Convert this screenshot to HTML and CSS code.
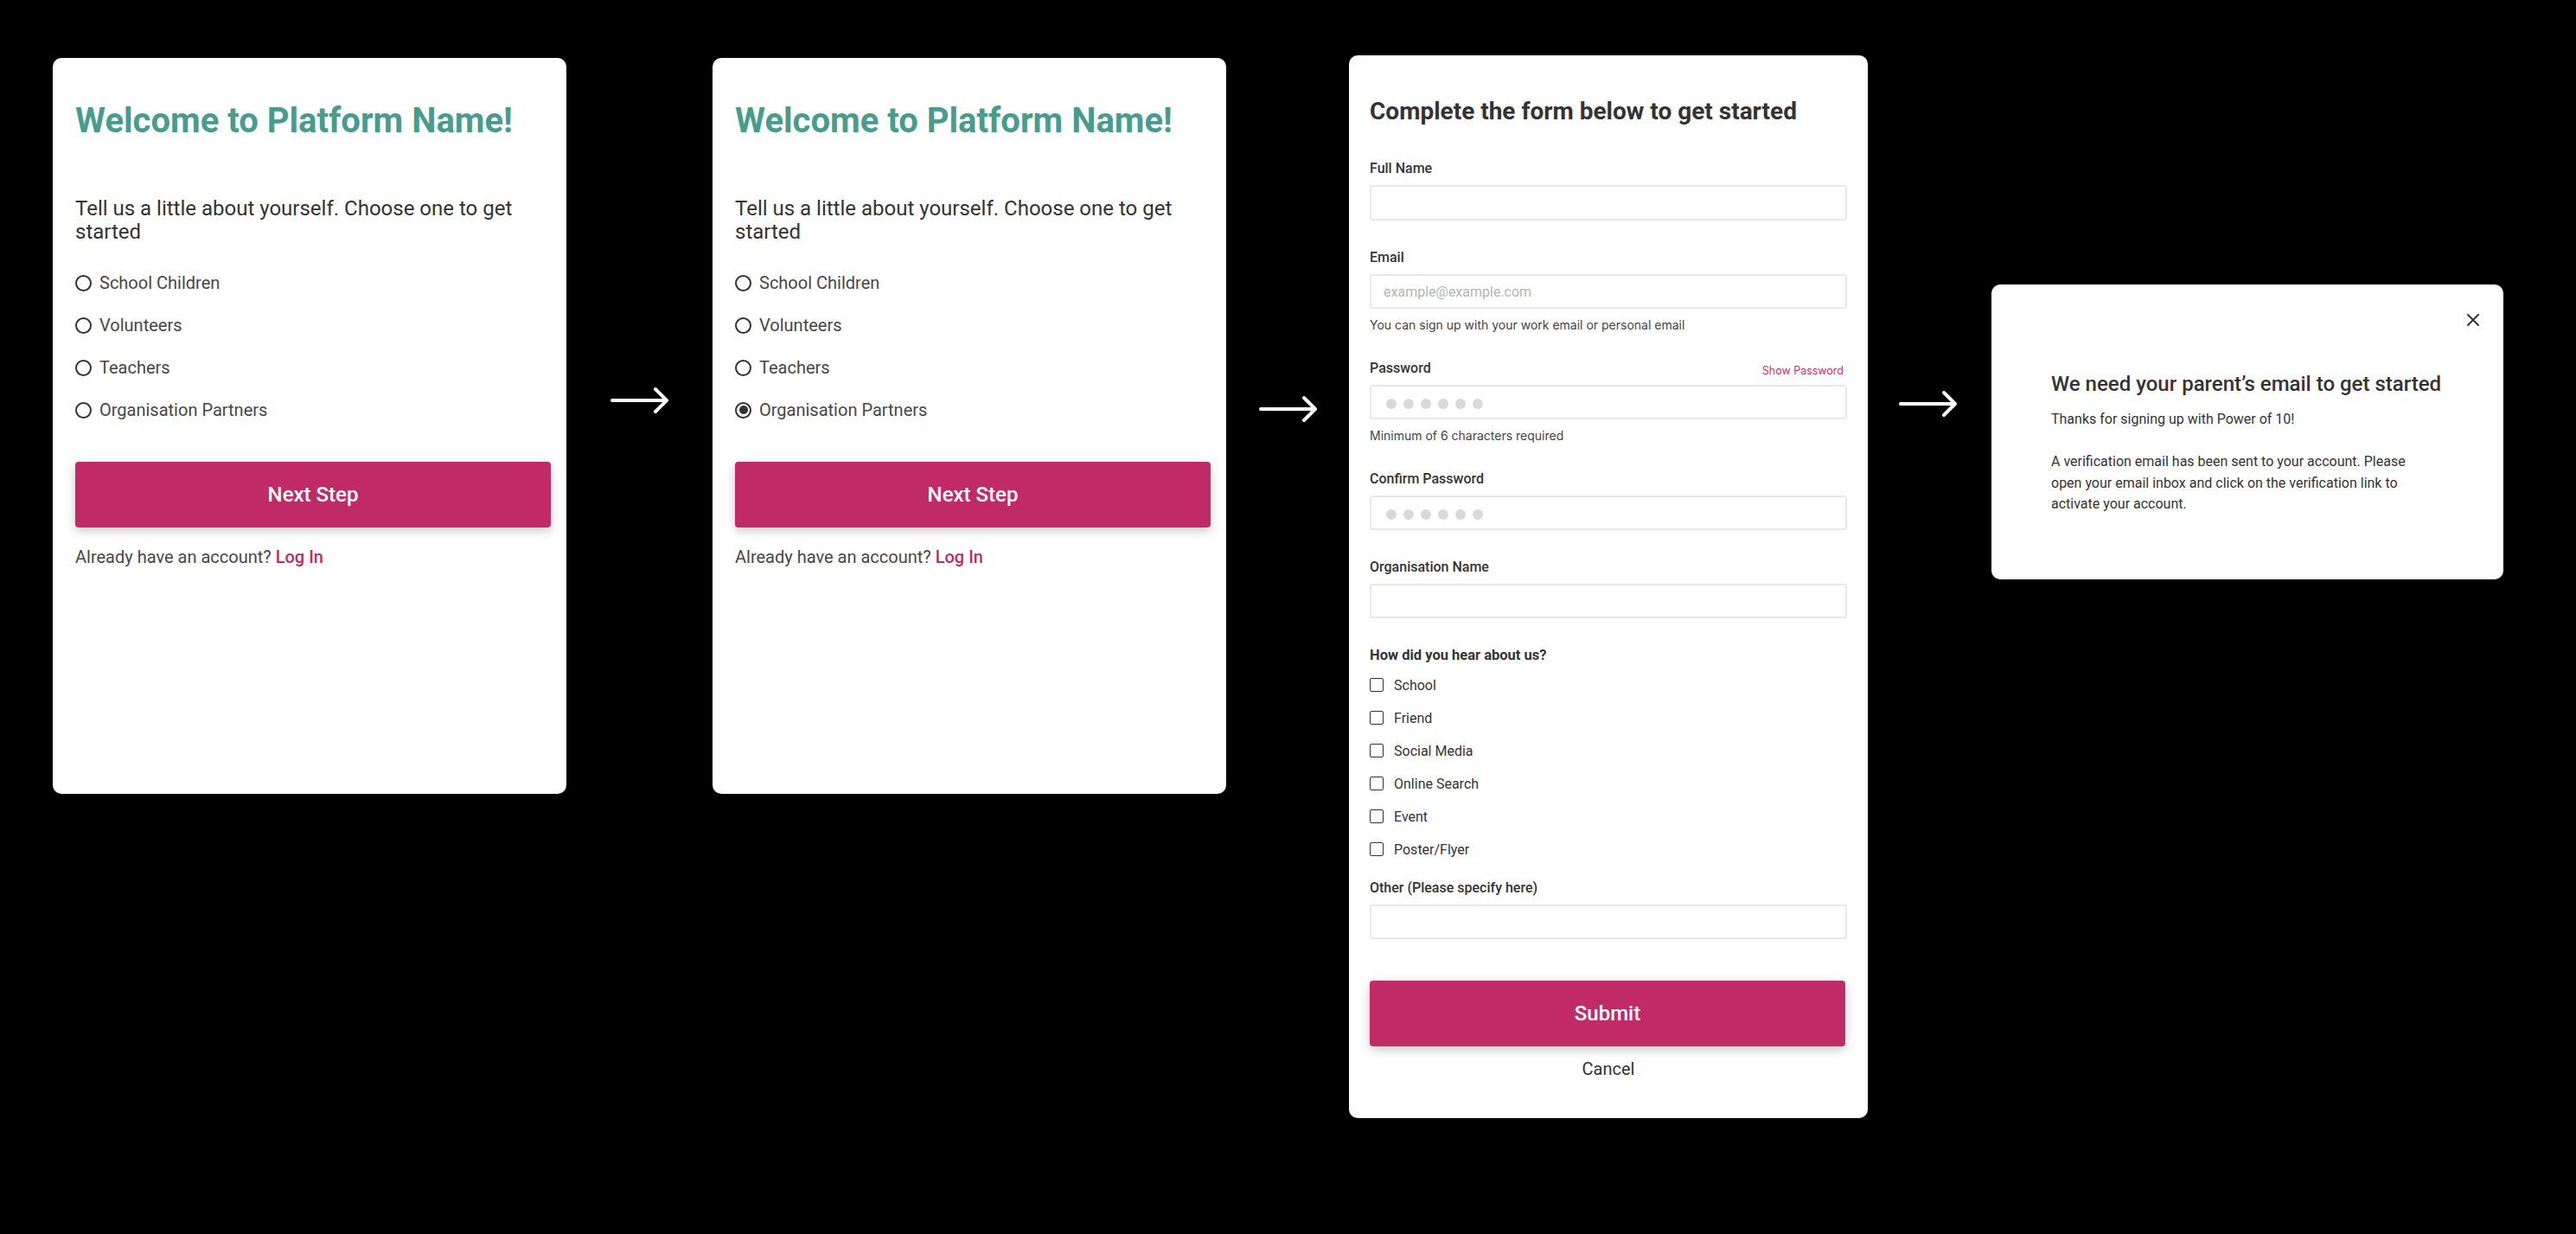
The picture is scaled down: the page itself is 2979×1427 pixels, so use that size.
FILE: index.html
```html
<!DOCTYPE html>
<html lang="en">
<head>
<meta charset="utf-8">
<title>Sign up flow</title>
<link rel="stylesheet" href="styles.css">
</head>
<body>
<main class="flow">

  <section class="card card-intro">
    <h1 class="intro-title">Welcome to Platform Name!</h1>
    <p class="intro-sub">Tell us a little about yourself. Choose one to get started</p>
    <ul class="options">
      <li class="option"><span class="radio"></span>School Children</li>
      <li class="option"><span class="radio"></span>Volunteers</li>
      <li class="option"><span class="radio"></span>Teachers</li>
      <li class="option"><span class="radio"></span>Organisation Partners</li>
    </ul>
    <div class="btn">Next Step</div>
    <p class="login">Already have an account? <span class="link">Log In</span></p>
  </section>

  <svg class="arrow arrow-1" width="68" height="32" viewBox="0 0 68 32" aria-hidden="true">
    <path d="M2 16H65M52 3L65 16L52 29" fill="none" stroke="#fff" stroke-width="4" stroke-linecap="round" stroke-linejoin="round"/>
  </svg>

  <section class="card card-intro">
    <h1 class="intro-title">Welcome to Platform Name!</h1>
    <p class="intro-sub">Tell us a little about yourself. Choose one to get started</p>
    <ul class="options">
      <li class="option"><span class="radio"></span>School Children</li>
      <li class="option"><span class="radio"></span>Volunteers</li>
      <li class="option"><span class="radio"></span>Teachers</li>
      <li class="option"><span class="radio radio-on"></span>Organisation Partners</li>
    </ul>
    <div class="btn">Next Step</div>
    <p class="login">Already have an account? <span class="link">Log In</span></p>
  </section>

  <svg class="arrow arrow-2" width="68" height="32" viewBox="0 0 68 32" aria-hidden="true">
    <path d="M2 16H65M52 3L65 16L52 29" fill="none" stroke="#fff" stroke-width="4" stroke-linecap="round" stroke-linejoin="round"/>
  </svg>

  <section class="card card-form">
    <h2 class="form-title">Complete the form below to get started</h2>

    <div class="field field-first">
      <div class="label">Full Name</div>
      <div class="input"></div>
    </div>

    <div class="field">
      <div class="label">Email</div>
      <div class="input"><span class="placeholder">example@example.com</span></div>
      <div class="hint">You can sign up with your work email or personal email</div>
    </div>

    <div class="field field-after-hint">
      <div class="label-row">
        <div class="label">Password</div>
        <div class="show">Show Password</div>
      </div>
      <div class="input"><span class="dots"><i></i><i></i><i></i><i></i><i></i><i></i></span></div>
      <div class="hint">Minimum of 6 characters required</div>
    </div>

    <div class="field field-after-hint">
      <div class="label">Confirm Password</div>
      <div class="input"><span class="dots"><i></i><i></i><i></i><i></i><i></i><i></i></span></div>
    </div>

    <div class="field">
      <div class="label">Organisation Name</div>
      <div class="input"></div>
    </div>

    <div class="field">
      <div class="label label-strong">How did you hear about us?</div>
      <ul class="checks">
        <li class="check"><span class="box"></span>School</li>
        <li class="check"><span class="box"></span>Friend</li>
        <li class="check"><span class="box"></span>Social Media</li>
        <li class="check"><span class="box"></span>Online Search</li>
        <li class="check"><span class="box"></span>Event</li>
        <li class="check"><span class="box"></span>Poster/Flyer</li>
      </ul>
    </div>

    <div class="field field-other">
      <div class="label">Other (Please specify here)</div>
      <div class="input"></div>
    </div>

    <div class="btn btn-submit">Submit</div>
    <p class="cancel">Cancel</p>
  </section>

  <svg class="arrow arrow-3" width="68" height="32" viewBox="0 0 68 32" aria-hidden="true">
    <path d="M2 16H65M52 3L65 16L52 29" fill="none" stroke="#fff" stroke-width="4" stroke-linecap="round" stroke-linejoin="round"/>
  </svg>

  <section class="card card-modal">
    <svg class="close" width="14" height="14" viewBox="0 0 14 14" aria-hidden="true">
      <path d="M1 1L13 13M13 1L1 13" stroke="#333" stroke-width="2" stroke-linecap="round"/>
    </svg>
    <h2 class="modal-title">We need your parent’s email to get started</h2>
    <p class="modal-text">Thanks for signing up with Power of 10!</p>
    <p class="modal-text modal-para">A verification email has been sent to your account. Please open your email inbox and click on the verification link to activate your account.</p>
  </section>

</main>
</body>
</html>
```

FILE: styles.css
```css
* { box-sizing: border-box; }

html, body {
  margin: 0;
  padding: 0;
  background: #000;
}

body {
  width: 2979px;
  height: 1427px;
  overflow: hidden;
  font-family: Roboto, "Liberation Sans", Arial, sans-serif;
  color: #333;
}

.flow {
  display: flex;
  align-items: flex-start;
  padding-left: 61px;
}

.card {
  background: #fff;
  border-radius: 10px;
  flex: none;
}

/* arrows */
.arrow { flex: none; display: block; }
.arrow-1 { margin: 447px 50px 0 51px; }
.arrow-2 { margin: 457px 36px 0 38px; }
.arrow-3 { margin: 451px 39px 0 36px; }

/* intro cards */
.card-intro {
  width: 594px;
  height: 851px;
  margin-top: 67px;
  padding: 50px 18px 0 26px;
}

.intro-title {
  margin: 0;
  font-size: 40px;
  line-height: 46px;
  font-weight: 700;
  color: #479c8e;
  white-space: nowrap;
}

.intro-sub {
  margin: 65px 0 0;
  font-size: 24px;
  line-height: 27px;
  font-weight: 400;
  color: #333;
}

.options {
  list-style: none;
  margin: 33px 0 0;
  padding: 0;
  display: flex;
  flex-direction: column;
  gap: 25px;
}

.option {
  display: flex;
  align-items: center;
  gap: 9px;
  height: 24px;
  font-size: 20px;
  line-height: 24px;
  color: #474747;
}

.radio {
  width: 19px;
  height: 19px;
  border: 2px solid #333;
  border-radius: 50%;
  flex: none;
  display: flex;
  align-items: center;
  justify-content: center;
}

.radio-on::after {
  content: "";
  width: 10px;
  height: 10px;
  border-radius: 50%;
  background: #333;
}

.btn {
  width: 550px;
  height: 76px;
  margin-top: 48px;
  background: #c02a67;
  color: #fff;
  border-radius: 4px;
  box-shadow: 0 4px 12px rgba(0, 0, 0, 0.22);
  display: flex;
  align-items: center;
  justify-content: center;
  font-size: 24px;
  font-weight: 500;
}

.login {
  margin: 22px 0 0;
  font-size: 20px;
  line-height: 24px;
  color: #474747;
}

.link {
  color: #c02a67;
  font-weight: 500;
}

/* form card */
.card-form {
  width: 600px;
  height: 1229px;
  margin-top: 64px;
  padding: 49px 24px 0 24px;
  display: flex;
  flex-direction: column;
}

.form-title {
  margin: 0;
  font-size: 28px;
  line-height: 32px;
  font-weight: 700;
  color: #333;
  white-space: nowrap;
}

.field { margin-top: 33px; }
.field-first { margin-top: 40px; }
.field-after-hint { margin-top: 31px; }
.field-other { margin-top: 24px; }

.label {
  font-size: 16px;
  line-height: 20px;
  font-weight: 500;
  color: #333;
}

.label-strong {
  font-size: 16.5px;
  font-weight: 700;
}

.label-row {
  display: flex;
  justify-content: space-between;
  align-items: flex-end;
}

.show {
  font-family: Inter, "Noto Sans", sans-serif;
  font-size: 12.5px;
  line-height: 14px;
  color: #cf2e6c;
  padding-right: 4px;
}

.input {
  height: 40px;
  margin-top: 9px;
  border: 2px solid #e8e8e8;
  border-radius: 3px;
  display: flex;
  align-items: center;
  padding-left: 14px;
}

.field-first .input { height: 41px; }

.placeholder {
  font-size: 16px;
  color: #b5b5b5;
}

.dots {
  display: flex;
  gap: 8px;
  padding-left: 3px;
  padding-top: 3px;
}

.dots i {
  width: 12px;
  height: 12px;
  border-radius: 50%;
  background: #d9d9d9;
}

.hint {
  margin-top: 10px;
  font-family: Inter, "Noto Sans", sans-serif;
  font-size: 14px;
  line-height: 18px;
  color: #444;
}

.checks {
  list-style: none;
  margin: 13px 0 0;
  padding: 0;
  display: flex;
  flex-direction: column;
  gap: 16px;
}

.check {
  display: flex;
  align-items: center;
  gap: 12px;
  height: 22px;
  font-size: 16px;
  color: #333;
}

.box {
  width: 16px;
  height: 16px;
  border: 1.5px solid #333;
  border-radius: 2px;
  flex: none;
}

.btn-submit {
  width: auto;
  margin-top: 48px;
  margin-right: 2px;
}

.cancel {
  margin: 14px 0 0;
  text-align: center;
  font-size: 20px;
  line-height: 24px;
  color: #333;
}

/* modal card */
.card-modal {
  position: relative;
  width: 592px;
  height: 341px;
  margin-top: 329px;
  padding: 101px 0 0 69px;
}

.close {
  position: absolute;
  top: 34px;
  right: 28px;
}

.modal-title {
  margin: 0;
  font-size: 24px;
  line-height: 28px;
  font-weight: 500;
  color: #333;
  white-space: nowrap;
}

.modal-text {
  margin: 15px 0 0;
  font-size: 16px;
  line-height: 24px;
  color: #333;
}

.modal-para {
  margin-top: 25px;
  line-height: 24.5px;
  max-width: 430px;
}
```
